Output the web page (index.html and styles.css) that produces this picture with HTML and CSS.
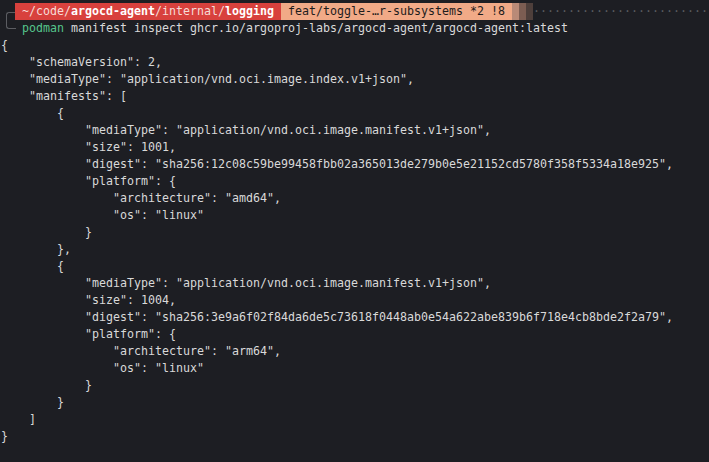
FILE: index.html
```html
<!DOCTYPE html>
<html>
<head>
<meta charset="utf-8">
<link rel="stylesheet" href="styles.css">
</head>
<body>
<div class="term">
<div class="line prompt"><span class="frame frame-top"></span><span class="seg seg-red"> ~/code/<b>argocd-agent</b>/internal/<b>logging</b> </span><span class="seg seg-salmon"> feat/toggle-…r-subsystems *2 !8 </span><span class="seg fade f1"> </span><span class="seg fade f2"> </span><span class="seg fade f3"> </span><span class="dots">·························</span></div>
<div class="line prompt"><span class="frame frame-bot"></span><span class="cmd"> podman</span><span> manifest inspect ghcr.io/argoproj-labs/argocd-agent/argocd-agent:latest</span></div>
<div class="line">{</div>
<div class="line">    "schemaVersion": 2,</div>
<div class="line">    "mediaType": "application/vnd.oci.image.index.v1+json",</div>
<div class="line">    "manifests": [</div>
<div class="line">        {</div>
<div class="line">            "mediaType": "application/vnd.oci.image.manifest.v1+json",</div>
<div class="line">            "size": 1001,</div>
<div class="line">            "digest": "sha256:12c08c59be99458fbb02a365013de279b0e5e21152cd5780f358f5334a18e925",</div>
<div class="line">            "platform": {</div>
<div class="line">                "architecture": "amd64",</div>
<div class="line">                "os": "linux"</div>
<div class="line">            }</div>
<div class="line">        },</div>
<div class="line">        {</div>
<div class="line">            "mediaType": "application/vnd.oci.image.manifest.v1+json",</div>
<div class="line">            "size": 1004,</div>
<div class="line">            "digest": "sha256:3e9a6f02f84da6de5c73618f0448ab0e54a622abe839b6f718e4cb8bde2f2a79",</div>
<div class="line">            "platform": {</div>
<div class="line">                "architecture": "arm64",</div>
<div class="line">                "os": "linux"</div>
<div class="line">            }</div>
<div class="line">        }</div>
<div class="line">    ]</div>
<div class="line">}</div>
</div>
</body>
</html>
```
FILE: styles.css
```css
html, body {
  margin: 0;
  background: #1d1e23;
}
body {
  padding: 3px 0 0 1px;
  width: 709px;
  height: 462px;
  box-sizing: border-box;
  overflow: hidden;
}
.term {
  font-family: "DejaVu Sans Mono", monospace;
  font-size: 11.63px;
  line-height: 17px;
  color: #d9d9d9;
}
.line {
  white-space: pre;
  height: 17px;
  overflow: hidden;
}
.prompt {
  display: flex;
}
.frame {
  flex: none;
  width: 14px;
  height: 17px;
  display: flex;
}
.frame::before {
  content: "";
  flex: none;
  width: 9px;
  height: 8px;
  margin-left: 5px;
  border-left: 1px solid #5c5d62;
}
.frame-top::before {
  margin-top: 9px;
  border-top: 1px solid #5c5d62;
  border-top-left-radius: 3px;
}
.frame-bot::before {
  border-bottom: 1px solid #5c5d62;
  border-bottom-left-radius: 3px;
}
.seg {
  flex: none;
  height: 17px;
}
.seg-red {
  background: #d8413d;
  color: #f6dcd8;
}
.seg-red b {
  color: #ffffff;
  font-weight: bold;
}
.seg-salmon {
  background: #f1aa87;
  color: #1d1c1c;
}
.fade { width: 7px; }
.f1 { background: #b98a77; }
.f2 { background: #7c5d52; }
.f3 { background: #4e3f3b; }
.dots {
  color: #5a5b5f;
  flex: none;
}
.cmd {
  color: #55c48b;
}
```
